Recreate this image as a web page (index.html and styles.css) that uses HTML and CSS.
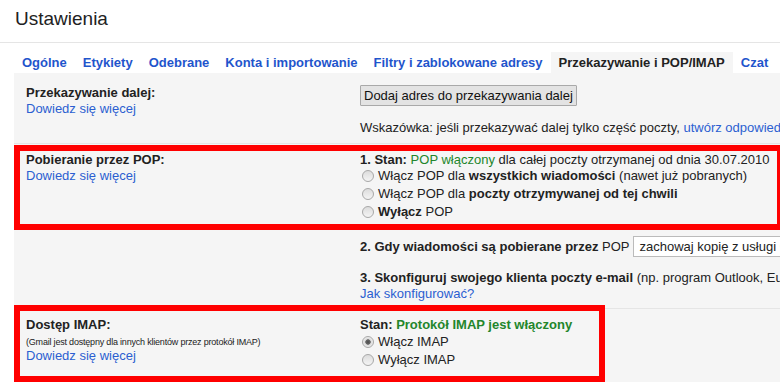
FILE: index.html
```html
<!DOCTYPE html>
<html>
	<head>
		<title>Ustawienia</title><meta charset="utf-8">
		<link rel="stylesheet" href="styles.css">
	</head>
	<body>
		<div class="header">Ustawienia</div>
		<div class="tabs">
			<a class="tab">Ogólne</a>
			<a class="tab">Etykiety</a>
			<a class="tab">Odebrane</a>
			<a class="tab">Konta i importowanie</a>
			<a class="tab">Filtry i zablokowane adresy</a>
			<span class="tab active">Przekazywanie i POP/IMAP</span>
			<a class="tab">Czat</a>
		</div>

		<div class="content">
			<div class="row row-fwd pair">
				<div class="label">
					<b>Przekazywanie dalej:</b>
					<a class="link">Dowiedz się więcej</a>
				</div>
				<div class="value">
					<button class="btn">Dodaj adres do przekazywania dalej</button>
					<div class="hint">Wskazówka: jeśli przekazywać dalej tylko część poczty, <a class="link">utwórz odpowiedni filtr!</a></div>
				</div>
			</div>

			<div class="row row-pop">
				<div class="mark mark-pop pair">
					<div class="label">
						<b>Pobieranie przez POP:</b>
						<a class="link">Dowiedz się więcej</a>
					</div>
					<div class="value">
						<div class="stan"><b>1. Stan:</b> <span class="on">POP włączony</span> dla całej poczty otrzymanej od dnia 30.07.2010</div>
						<div class="radio"><span class="dot"></span><span>Włącz POP dla <b>wszystkich wiadomości</b> (nawet już pobranych)</span></div>
						<div class="radio"><span class="dot"></span><span>Włącz POP dla <b>poczty otrzymywanej od tej chwili</b></span></div>
						<div class="radio"><span class="dot"></span><span><b>Wyłącz</b> POP</span></div>
					</div>
				</div>
				<div class="sub pair">
					<div class="label"></div>
					<div class="value">
						<div class="step2"><span><b>2. Gdy wiadomości są pobierane przez</b> POP</span><span class="select">zachowaj kopię z usługi Gmail w Odebranych</span></div>
						<div class="step3"><b>3. Skonfiguruj swojego klienta poczty e-mail</b> (np. program Outlook, Eudora, Netscape Mail)</div>
						<a class="link">Jak skonfigurować?</a>
					</div>
				</div>
			</div>

			<div class="mark mark-imap pair">
				<div class="label">
					<b>Dostęp IMAP:</b>
					<div class="small">(Gmail jest dostępny dla innych klientów przez protokół IMAP)</div>
					<a class="link">Dowiedz się więcej</a>
				</div>
				<div class="value">
					<div class="stan"><b>Stan:</b> <span class="on">Protokół IMAP jest włączony</span></div>
					<div class="radio"><span class="dot checked"></span><span>Włącz IMAP</span></div>
					<div class="radio"><span class="dot"></span><span>Wyłącz IMAP</span></div>
				</div>
			</div>
		</div>
	</body>
</html>
```

FILE: styles.css
```css
body {
	margin: 0;
	overflow: hidden;
	font-family: "Liberation Sans", Arial, sans-serif;
	font-size: 13px;
	color: #222;
	background: white;
}
b { font-weight: bold; }

.header {
	height: 42px;
	line-height: 38px;
	padding-left: 15px;
	font-size: 19px;
	border-bottom: 1px solid #e5e5e5;
}

.tabs {
	display: flex;
	margin: 9px 0 0 14px;
	white-space: nowrap;
}
.tab {
	padding: 0 8px;
	line-height: 21px;
	font-weight: bold;
	color: #1f55cc;
}
.tab.active { background: #f5f5f5; color: #222; padding: 0 8px; }

.content {
	margin-left: 14px;
	width: 1000px;
	background: #f5f5f5;
	white-space: nowrap;
}
.pair { display: grid; grid-template-columns: 346px 1fr; }
.label { padding-left: 12px; line-height: 16px; }
.label b, .label .link { display: block; }
.link { color: #2b5fd1; }
.value { line-height: 16px; }

.row { border-bottom: 1px solid #e5e5e5; }
.row-fwd { padding: 12px 0 7px; }
.btn {
	display: block;
	height: 21px;
	padding: 0 3px;
	font: 13px "Liberation Sans", Arial, sans-serif;
	color: #111;
	background: #e3e3e3;
	border: 1px solid #a9a9a9;
	border-radius: 1px;
}
.hint { margin-top: 14px; }

.mark { box-shadow: inset 0 0 0 6px #ff0000; }
.mark-pop { width: 769px; margin-top: 1px; padding: 7px 0 9px; }
.mark-pop .stan { line-height: 15px; }
.on { color: #23862b; font-weight: bold; }
.mark-pop .on { font-weight: normal; }

.radio { display: flex; align-items: center; height: 18px; }
.dot {
	box-sizing: border-box;
	width: 12px;
	height: 12px;
	margin: 0 4px 0 2px;
	border-radius: 50%;
	border: 1px solid #a8a8a8;
	background: linear-gradient(#dcdcdc, #f4f4f4);
}
.dot.checked { background: radial-gradient(circle, #4a4a4a 0, #6a6a6a 2.4px, #dcdcdc 3px, #f4f4f4 6px); }

.sub { padding: 6px 0 6px; }
.step2 { display: flex; align-items: center; height: 21px; }
.select {
	box-sizing: border-box;
	height: 21px;
	margin-left: 4px;
	padding: 0 5px;
	line-height: 19px;
	background: white;
	border: 1px solid #bbb;
	width: 300px;
}
.step3 { margin-top: 13px; }
.sub .link { display: block; }

.mark-imap { width: 591px; height: 77px; margin-top: -4px; padding-top: 12px; box-sizing: border-box; }
.small { font-size: 9px; line-height: 12px; margin-top: 3px; letter-spacing: -0.2px; }
```
